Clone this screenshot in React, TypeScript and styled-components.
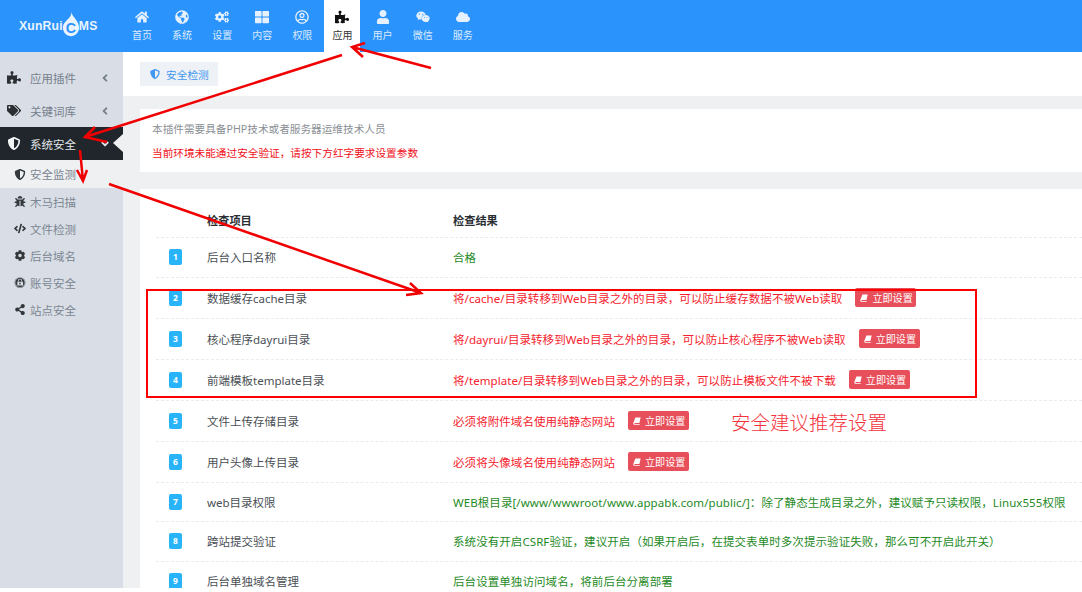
import { ReactNode } from 'react';
import styled, { createGlobalStyle } from 'styled-components';
import {
  FaAngleDown,
  FaAngleLeft,
  FaBug,
  FaCloud,
  FaCode,
  FaCog,
  FaCogs,
  FaExpeditedssl,
  FaGlobeAmericas,
  FaHome,
  FaPuzzlePiece,
  FaRegUserCircle,
  FaShareAlt,
  FaShieldAlt,
  FaTags,
  FaThLarge,
  FaUser,
  FaWeixin,
} from 'react-icons/fa';

const GlobalStyle = createGlobalStyle`
  html, body {
    margin: 0;
    padding: 0;
    background: #fff;
  }

  body {
    font-family: "Noto Sans", "Noto Sans CJK SC", sans-serif;
    font-size: 11.5px;
    overflow: hidden;
  }
`;

const Page = styled.div`
  position: relative;
  width: 1082px;
  height: 588px;
  overflow: hidden;
  display: flex;
  flex-direction: column;
`;

const Header = styled.header`
  display: flex;
  height: 52px;
  flex: none;
  background: #2b93fc;
`;

const Logo = styled.div`
  width: 124px;
  flex: none;
  display: flex;
  align-items: center;
  padding-left: 19px;
  box-sizing: border-box;
  color: #e9f3ff;
  font-family: "Liberation Sans", sans-serif;
  font-size: 12.2px;
  font-weight: 700;
  letter-spacing: 0.2px;
`;

const Flame = styled.svg`
  width: 18px;
  height: 26px;
  margin: -4px -1px 0 -1px;
  flex: none;
`;

const Nav = styled.nav`
  display: flex;
  gap: 4.1px;
`;

const NavItem = styled.div<{ $active?: boolean }>`
  width: 36px;
  height: 52px;
  display: flex;
  flex-direction: column;
  align-items: center;
  padding-top: 10px;
  box-sizing: border-box;
  gap: 4px;
  background: ${(p) => (p.$active ? '#fff' : 'transparent')};
  color: ${(p) => (p.$active ? '#333' : '#dcebff')};
  font-size: 10px;
  line-height: 14px;
  white-space: nowrap;

  svg {
    font-size: 14px;
    height: 14px;
    color: ${(p) => (p.$active ? '#111' : '#e6f1ff')};
  }
`;

const Body = styled.div`
  display: flex;
  flex: 1;
  min-height: 0;
`;

const Sidebar = styled.aside`
  width: 123px;
  flex: none;
  background: #d9dee6;
  padding-top: 9px;
  box-sizing: border-box;
`;

const MenuItem = styled.div<{ $open?: boolean }>`
  position: relative;
  display: flex;
  align-items: center;
  height: 33px;
  padding: 0 14px 0 7px;
  gap: 9px;
  background: ${(p) => (p.$open ? '#20262c' : 'transparent')};
  color: ${(p) => (p.$open ? '#e4e7eb' : '#76808b')};
  font-size: 11.5px;

  svg {
    font-size: 13px;
    width: 14px;
    flex: none;
    color: ${(p) => (p.$open ? '#f2f4f6' : '#2b2f33')};
  }

  ${(p) =>
    p.$open
      ? `&::after {
    content: '';
    position: absolute;
    right: 0;
    top: 7px;
    border-top: 9px solid transparent;
    border-bottom: 9px solid transparent;
    border-right: 10px solid #eef0f2;
  }`
      : ''}
`;

const MenuLabel = styled.span`
  flex: 1;
`;

const Caret = styled.span`
  display: flex;
  width: 8px;
  justify-content: center;

  && svg {
    font-size: 12px;
    width: 12px;
    color: inherit;
  }
`;

const SubItem = styled.div<{ $active?: boolean }>`
  display: flex;
  align-items: center;
  height: ${(p) => (p.$active ? '28px' : '27px')};
  padding-left: 14px;
  gap: 4px;
  background: ${(p) => (p.$active ? '#eef0f2' : 'transparent')};
  color: #7b8691;
  font-size: 11.5px;

  svg {
    font-size: 11px;
    width: 12px;
    flex: none;
    color: #33383d;
  }
`;

const Main = styled.main`
  flex: 1;
  min-width: 0;
  background: #eef0f2;
  overflow: hidden;
`;

const TabStrip = styled.div`
  height: 44px;
  background: #fff;
  padding: 10px 0 0 17px;
  box-sizing: border-box;
`;

const Tab = styled.div`
  display: inline-flex;
  align-items: center;
  gap: 6px;
  height: 24px;
  width: 78px;
  padding-left: 10px;
  box-sizing: border-box;
  background: #eef1f5;
  color: #3f97f0;
  font-size: 10.7px;

  svg {
    font-size: 10px;
    color: #3f97f0;
  }
`;

const NoticeCard = styled.section`
  height: 63px;
  margin: 13px 0 17px 17px;
  padding: 8px 0 0 12px;
  box-sizing: border-box;
  background: #fff;
  font-size: 10.65px;
  line-height: 24px;
`;

const NoticeLine = styled.div<{ $alert?: boolean }>`
  color: ${(p) => (p.$alert ? '#f01020' : '#8a8f94')};
  white-space: nowrap;
`;

const TableCard = styled.section`
  margin-left: 17px;
  padding: 14px 0 0 16px;
  background: #fff;
  min-height: 400px;
`;

const Row = styled.div<{ $height: number }>`
  display: grid;
  grid-template-columns: 51px 246px 1fr;
  align-items: center;
  height: ${(p) => p.$height}px;
  box-sizing: border-box;
  border-bottom: 1px dashed #e7ecf1;
  color: #4a4f55;
  white-space: nowrap;
`;

const HeadCell = styled.div`
  color: #2a2e33;
  font-weight: 600;
  font-size: 11.2px;
`;

const Badge = styled.div`
  width: 13px;
  height: 16px;
  margin-left: 13px;
  border-radius: 2px;
  background: #29b4f9;
  color: #fff;
  font-size: 8.5px;
  font-weight: 700;
  line-height: 16px;
  text-align: center;
`;

const Result = styled.div<{ $tone: 'red' | 'green' }>`
  display: flex;
  align-items: center;
  letter-spacing: 0.07px;
  color: ${(p) => (p.$tone === 'red' ? '#f5222d' : '#1f8a1f')};
`;

const FixButton = styled.span`
  display: inline-flex;
  align-items: center;
  gap: 4px;
  width: 61px;
  height: 19px;
  margin-left: 13px;
  padding-left: 5px;
  box-sizing: border-box;
  border-radius: 2px;
  background: #e7505a;
  color: #fff;
  font-size: 10.1px;
  letter-spacing: 0;
`;

const BookIcon = styled.svg`
  width: 8px;
  height: 8px;
  flex: none;
`;

const Overlay = styled.svg`
  position: absolute;
  left: 0;
  top: 0;
  pointer-events: none;
`;

const RedBox = styled.div`
  position: absolute;
  left: 146px;
  top: 289px;
  width: 831px;
  height: 109px;
  box-sizing: border-box;
  border: 2.5px solid #f00;
`;

const AdviceNote = styled.div`
  position: absolute;
  left: 731px;
  top: 409px;
  color: #f4323c;
  font-family: "Noto Sans CJK SC", serif;
  font-size: 19.5px;
  font-weight: 300;
  line-height: 26px;
  white-space: nowrap;
`;

const navItems: { label: string; icon: ReactNode; active?: boolean }[] = [
  { label: '首页', icon: <FaHome /> },
  { label: '系统', icon: <FaGlobeAmericas /> },
  { label: '设置', icon: <FaCogs /> },
  { label: '内容', icon: <FaThLarge /> },
  { label: '权限', icon: <FaRegUserCircle /> },
  { label: '应用', icon: <FaPuzzlePiece />, active: true },
  { label: '用户', icon: <FaUser /> },
  { label: '微信', icon: <FaWeixin /> },
  { label: '服务', icon: <FaCloud /> },
];

const subItems: { label: string; icon: ReactNode; active?: boolean }[] = [
  { label: '安全监测', icon: <FaShieldAlt />, active: true },
  { label: '木马扫描', icon: <FaBug /> },
  { label: '文件检测', icon: <FaCode /> },
  { label: '后台域名', icon: <FaCog /> },
  { label: '账号安全', icon: <FaExpeditedssl /> },
  { label: '站点安全', icon: <FaShareAlt /> },
];

const checks: { name: string; result: string; tone: 'red' | 'green'; fix?: boolean; height: number }[] = [
  { name: '后台入口名称', result: '合格', tone: 'green', height: 39.5 },
  { name: '数据缓存cache目录', result: '将/cache/目录转移到Web目录之外的目录，可以防止缓存数据不被Web读取', tone: 'red', fix: true, height: 41 },
  { name: '核心程序dayrui目录', result: '将/dayrui/目录转移到Web目录之外的目录，可以防止核心程序不被Web读取', tone: 'red', fix: true, height: 41 },
  { name: '前端模板template目录', result: '将/template/目录转移到Web目录之外的目录，可以防止模板文件不被下载', tone: 'red', fix: true, height: 41 },
  { name: '文件上传存储目录', result: '必须将附件域名使用纯静态网站', tone: 'red', fix: true, height: 41 },
  { name: '用户头像上传目录', result: '必须将头像域名使用纯静态网站', tone: 'red', fix: true, height: 41 },
  { name: 'web目录权限', result: 'WEB根目录[/www/wwwroot/www.appabk.com/public/]：除了静态生成目录之外，建议赋予只读权限，Linux555权限', tone: 'green', height: 39.5 },
  { name: '跨站提交验证', result: '系统没有开启CSRF验证，建议开启（如果开启后，在提交表单时多次提示验证失败，那么可不开启此开关）', tone: 'green', height: 39.5 },
  { name: '后台单独域名管理', result: '后台设置单独访问域名，将前后台分离部署', tone: 'green', height: 39.5 },
];

const arrows = [
  'M431 68 L352 47 M365 43 L352 47 L363 57',
  'M342 55 L85 137 M95 127 L85 137 L107 142',
  'M80 150 L83 181 M77 170 L83 181 L87 170',
  'M109 184 L421 293 M410 283 L421 293 L406 295',
];

const App = () => {
  return (
    <Page>
      <GlobalStyle />
      <Header>
        <Logo>
          <span>XunRui</span>
          <Flame viewBox="0 0 19 26">
            <path d="M10 0 C10 5 18 9 18 17 C18 22 14 26 9.5 26 C5 26 1 22 1 17 C1 12 4 11 6 8 C8 6 10 4 10 0 Z" fill="#eaf4ff" />
            <text x="9.5" y="22" textAnchor="middle" fontSize="15" fontWeight="700" fill="#2b93fc" fontFamily="Liberation Sans, sans-serif">C</text>
          </Flame>
          <span>MS</span>
        </Logo>
        <Nav>
          {navItems.map((item) => (
            <NavItem key={item.label} $active={item.active}>
              {item.icon}
              <span>{item.label}</span>
            </NavItem>
          ))}
        </Nav>
      </Header>
      <Body>
        <Sidebar>
          <MenuItem>
            <FaPuzzlePiece />
            <MenuLabel>应用插件</MenuLabel>
            <Caret><FaAngleLeft /></Caret>
          </MenuItem>
          <MenuItem>
            <FaTags />
            <MenuLabel>关键词库</MenuLabel>
            <Caret><FaAngleLeft /></Caret>
          </MenuItem>
          <MenuItem $open>
            <FaShieldAlt />
            <MenuLabel>系统安全</MenuLabel>
            <Caret><FaAngleDown /></Caret>
          </MenuItem>
          {subItems.map((item) => (
            <SubItem key={item.label} $active={item.active}>
              {item.icon}
              <span>{item.label}</span>
            </SubItem>
          ))}
        </Sidebar>
        <Main>
          <TabStrip>
            <Tab>
              <FaShieldAlt />
              <span>安全检测</span>
            </Tab>
          </TabStrip>
          <NoticeCard>
            <NoticeLine>本插件需要具备PHP技术或者服务器运维技术人员</NoticeLine>
            <NoticeLine $alert>当前环境未能通过安全验证，请按下方红字要求设置参数</NoticeLine>
          </NoticeCard>
          <TableCard>
            <Row $height={35}>
              <span />
              <HeadCell>检查项目</HeadCell>
              <HeadCell>检查结果</HeadCell>
            </Row>
            {checks.map((check, index) => (
              <Row key={check.name} $height={check.height}>
                <Badge>{index + 1}</Badge>
                <div>{check.name}</div>
                <Result $tone={check.tone}>
                  <span>{check.result}</span>
                  {check.fix && (
                    <FixButton>
                      <BookIcon viewBox="0 0 10 10">
                        <path d="M3 0.5 H9.6 L8 7.6 H2.2 C1.5 7.6 1.4 8.7 2.2 8.7 H8.6 L8.3 9.6 H1.6 C0.5 9.6 0.1 8.6 0.4 7.4 Z" fill="#fff" />
                      </BookIcon>
                      立即设置
                    </FixButton>
                  )}
                </Result>
              </Row>
            ))}
          </TableCard>
        </Main>
      </Body>
      <RedBox />
      <AdviceNote>安全建议推荐设置</AdviceNote>
      <Overlay width="1082" height="588" viewBox="0 0 1082 588" fill="none">
        {arrows.map((d) => (
          <path key={d} d={d} stroke="#f00000" strokeWidth="2.5" />
        ))}
      </Overlay>
    </Page>
  );
};

export default App;
